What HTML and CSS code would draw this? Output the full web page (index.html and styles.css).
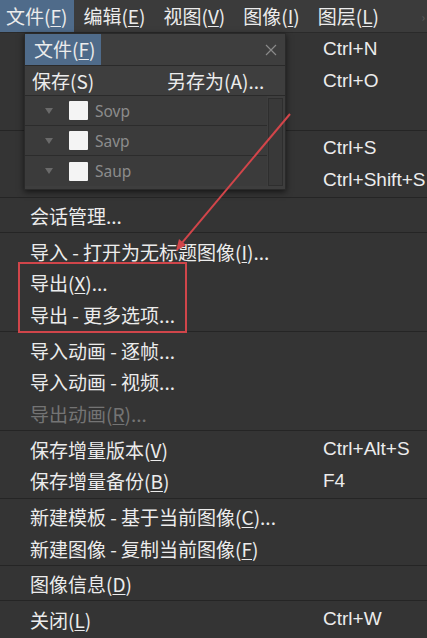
FILE: index.html
```html
<!DOCTYPE html>
<html lang="zh">
<head>
<meta charset="utf-8">
<link rel="stylesheet" href="styles.css">
</head>
<body>
<div class="screen">
  <div class="menubar">
    <span class="mb-item active">文件(<u>F</u>)</span>
    <span class="mb-item">编辑(<u>E</u>)</span>
    <span class="mb-item">视图(<u>V</u>)</span>
    <span class="mb-item">图像(<u>I</u>)</span>
    <span class="mb-item">图层(<u>L</u>)</span>
    <span class="mb-more">›</span>
  </div>
  <div class="menu">
    <div class="item"><span class="label"></span><span class="key">Ctrl+N</span></div>
    <div class="item"><span class="label"></span><span class="key">Ctrl+O</span></div>
    <div class="item"><span class="label"></span></div>
    <div class="sep"></div>
    <div class="item"><span class="label"></span><span class="key">Ctrl+S</span></div>
    <div class="item"><span class="label"></span><span class="key">Ctrl+Shift+S</span></div>
    <div class="sep"></div>
    <div class="item"><span class="label">会话管理...</span></div>
    <div class="sep"></div>
    <div class="item"><span class="label">导入 - 打开为无标题图像(<u>I</u>)...</span></div>
    <div class="item"><span class="label">导出(<u>X</u>)...</span></div>
    <div class="item"><span class="label">导出 - 更多选项...</span></div>
    <div class="sep"></div>
    <div class="item"><span class="label">导入动画 - 逐帧...</span></div>
    <div class="item"><span class="label">导入动画 - 视频...</span></div>
    <div class="item disabled"><span class="label">导出动画(<u>R</u>)...</span></div>
    <div class="sep"></div>
    <div class="item"><span class="label">保存增量版本(<u>V</u>)</span><span class="key">Ctrl+Alt+S</span></div>
    <div class="item"><span class="label">保存增量备份(<u>B</u>)</span><span class="key">F4</span></div>
    <div class="sep"></div>
    <div class="item"><span class="label">新建模板 - 基于当前图像(<u>C</u>)...</span></div>
    <div class="item"><span class="label">新建图像 - 复制当前图像(<u>F</u>)</span></div>
    <div class="sep"></div>
    <div class="item"><span class="label">图像信息(<u>D</u>)</span></div>
    <div class="sep"></div>
    <div class="item"><span class="label">关闭(<u>L</u>)</span><span class="key">Ctrl+W</span></div>
  </div>

  <div class="popup">
    <div class="pop-title">
      <span class="pop-tab">文件(<u>F</u>)</span>
      <svg class="pop-close" width="12" height="12" viewBox="0 0 12 12"><path d="M1 1L11 11M11 1L1 11" stroke="#8a8a8a" stroke-width="1.2" fill="none"/></svg>
    </div>
    <div class="pop-row">
      <span class="pop-save">保存(S)</span>
      <span class="pop-saveas">另存为(A)...</span>
    </div>
    <div class="pop-list">
      <div class="rows">
        <div class="lrow"><span class="tri"></span><span class="sq"></span><span class="ltext">Sovp</span></div>
        <div class="lrow"><span class="tri"></span><span class="sq"></span><span class="ltext">Savp</span></div>
        <div class="lrow"><span class="tri"></span><span class="sq"></span><span class="ltext">Saup</span></div>
      </div>
      <div class="scroll"></div>
    </div>
  </div>

  <div class="mark"></div>
  <svg class="arrow" width="427" height="638" viewBox="0 0 427 638">
    <line x1="290" y1="114" x2="182.4" y2="242.3" stroke="#d2454a" stroke-width="2"/>
    <polygon points="176,251 186,245 179,239" fill="#d2454a"/>
  </svg>
</div>
</body>
</html>
```
FILE: styles.css
```css
html, body {
  margin: 0;
  padding: 0;
  background: #343434;
}
body {
  font-family: "Noto Sans CJK SC", "Noto Sans", sans-serif;
  color: #ececec;
}
.screen {
  position: relative;
  width: 427px;
  height: 638px;
  overflow: hidden;
  background: #343434;
}
u {
  text-decoration-thickness: 1px;
  text-underline-offset: 2px;
}
.menubar {
  display: flex;
  align-items: center;
  height: 33px;
  background: #3b3b3b;
  border-bottom: 1px solid #2a2a2a;
  font-size: 19px;
  box-sizing: border-box;
}
.mb-item {
  height: 32px;
  line-height: 31px;
  padding: 0 9px;
  white-space: nowrap;
}
.mb-item.active {
  background: #4f6b8a;
  padding: 0 7px 0 6px;
}
.mb-more {
  margin-left: auto;
  margin-right: 2px;
  color: #5c5c5c;
  font-size: 12px;
}
.menu {
  display: flex;
  flex-direction: column;
  background: #343434;
  font-size: 19px;
}
.item {
  display: flex;
  align-items: center;
  height: 31.75px;
  padding-left: 30px;
  padding-top: 1px;
  box-sizing: border-box;
  white-space: nowrap;
}
.item .label {
  flex: 0 0 293px;
}
.item .key {
  font-family: "Liberation Sans", Arial, sans-serif;
  font-size: 19px;
}
.item.disabled {
  color: #747474;
}
.sep {
  height: 1px;
  margin: 1.25px 0 1.5px;
  background: #252525;
}
.popup {
  position: absolute;
  left: 24px;
  top: 33px;
  width: 262px;
  height: 157px;
  background: #3e3e3e;
  border: 1px solid #2a2a2a;
  box-sizing: border-box;
  box-shadow: 0 2px 6px rgba(0,0,0,0.6);
  display: flex;
  flex-direction: column;
  font-size: 19px;
}
.pop-title {
  display: flex;
  align-items: center;
  justify-content: space-between;
  height: 31px;
  border-bottom: 1px solid #2a2a2a;
}
.pop-tab {
  background: #4f6b8a;
  height: 31px;
  line-height: 30px;
  padding: 0 6px 0 9px;
}
.pop-close {
  margin-right: 8px;
}
.pop-row {
  display: flex;
  align-items: center;
  height: 31px;
  border-bottom: 1px solid #2a2a2a;
  padding-left: 7px;
}
.pop-save {
  flex: 0 0 135px;
}
.pop-list {
  flex: 1;
  display: flex;
  padding-bottom: 3px;
}
.rows {
  flex: 1;
  display: flex;
  flex-direction: column;
}
.lrow {
  display: flex;
  align-items: center;
  height: 30px;
  border-bottom: 1px solid #2c2c2c;
  background: #3b3b3b;
  box-sizing: border-box;
}
.lrow:last-child {
  border-bottom: none;
}
.tri {
  width: 0;
  height: 0;
  margin-left: 20px;
  border-left: 4.5px solid transparent;
  border-right: 4.5px solid transparent;
  border-top: 6px solid #6a6a6a;
}
.sq {
  width: 19px;
  height: 19px;
  margin-left: 16px;
  background: #f4f4f4;
  border-radius: 1px;
}
.ltext {
  margin-left: 7px;
  color: #8c8c8c;
  font-family: "Noto Sans", sans-serif;
  font-size: 15.5px;
}
.scroll {
  width: 15px;
  margin: 2px 2px 0 1px;
  background: #393939;
  border: 1px solid #2e2e2e;
  box-sizing: border-box;
}
.mark {
  position: absolute;
  left: 18px;
  top: 262px;
  width: 169px;
  height: 71px;
  border: 2px solid #d0454a;
  box-sizing: border-box;
}
.arrow {
  position: absolute;
  left: 0;
  top: 0;
  pointer-events: none;
}
```
